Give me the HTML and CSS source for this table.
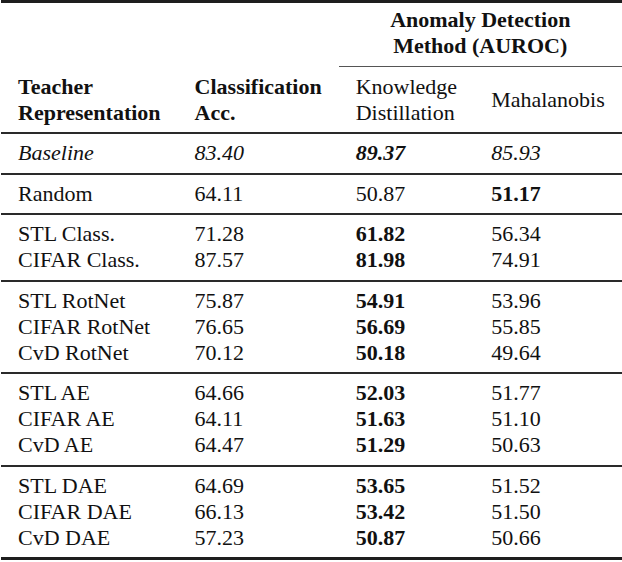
FILE: index.html
```html
<!DOCTYPE html>
<html>
<head>
<meta charset="utf-8">
<link rel="stylesheet" href="styles.css">
</head>
<body>
<table class="results">
  <thead>
    <tr class="group-row">
      <td colspan="2"></td>
      <th colspan="2" class="group">Anomaly Detection<br>Method (AUROC)</th>
    </tr>
    <tr class="col-row">
      <th>Teacher<br>Representation</th>
      <th>Classification<br>Acc.</th>
      <td>Knowledge<br>Distillation</td>
      <td>Mahalanobis</td>
    </tr>
  </thead>
  <tbody class="first">
    <tr class="baseline"><td>Baseline</td><td>83.40</td><td><b>89.37</b></td><td>85.93</td></tr>
  </tbody>
  <tbody>
    <tr><td>Random</td><td>64.11</td><td>50.87</td><td><b>51.17</b></td></tr>
  </tbody>
  <tbody>
    <tr><td>STL Class.</td><td>71.28</td><td><b>61.82</b></td><td>56.34</td></tr>
    <tr><td>CIFAR Class.</td><td>87.57</td><td><b>81.98</b></td><td>74.91</td></tr>
  </tbody>
  <tbody>
    <tr><td>STL RotNet</td><td>75.87</td><td><b>54.91</b></td><td>53.96</td></tr>
    <tr><td>CIFAR RotNet</td><td>76.65</td><td><b>56.69</b></td><td>55.85</td></tr>
    <tr><td>CvD RotNet</td><td>70.12</td><td><b>50.18</b></td><td>49.64</td></tr>
  </tbody>
  <tbody>
    <tr><td>STL AE</td><td>64.66</td><td><b>52.03</b></td><td>51.77</td></tr>
    <tr><td>CIFAR AE</td><td>64.11</td><td><b>51.63</b></td><td>51.10</td></tr>
    <tr><td>CvD AE</td><td>64.47</td><td><b>51.29</b></td><td>50.63</td></tr>
  </tbody>
  <tbody>
    <tr><td>STL DAE</td><td>64.69</td><td><b>53.65</b></td><td>51.52</td></tr>
    <tr><td>CIFAR DAE</td><td>66.13</td><td><b>53.42</b></td><td>51.50</td></tr>
    <tr><td>CvD DAE</td><td>57.23</td><td><b>50.87</b></td><td>50.66</td></tr>
  </tbody>
</table>
</body>
</html>
```

FILE: styles.css
```css
html, body {
  margin: 0;
  padding: 0;
  background: #ffffff;
}

body {
  font-family: "Liberation Serif", "Times New Roman", serif;
  font-size: 22px;
  color: #111111;
}

.results {
  border-collapse: separate;
  border-spacing: 0;
  margin-left: 1px;
  border-top: 3px solid #1e1e1e;
  border-bottom: 3px solid #1e1e1e;
}

.results td,
.results th {
  padding: 0 17px;
  line-height: 26px;
  text-align: left;
  white-space: nowrap;
  vertical-align: middle;
}

.results th {
  font-weight: bold;
}

.group-row th.group {
  text-align: center;
  padding-top: 4px;
  padding-bottom: 7px;
  border-bottom: 1px solid #555555;
}

.col-row th,
.col-row td {
  padding-top: 7px;
  padding-bottom: 6px;
}

.results tbody tr:first-child td {
  border-top: 2px solid #2a2a2a;
  padding-top: 6px;
}

.results tbody tr:last-child td {
  padding-bottom: 6.5px;
}

.results b {
  font-weight: bold;
}

.baseline td {
  font-style: italic;
}
```
